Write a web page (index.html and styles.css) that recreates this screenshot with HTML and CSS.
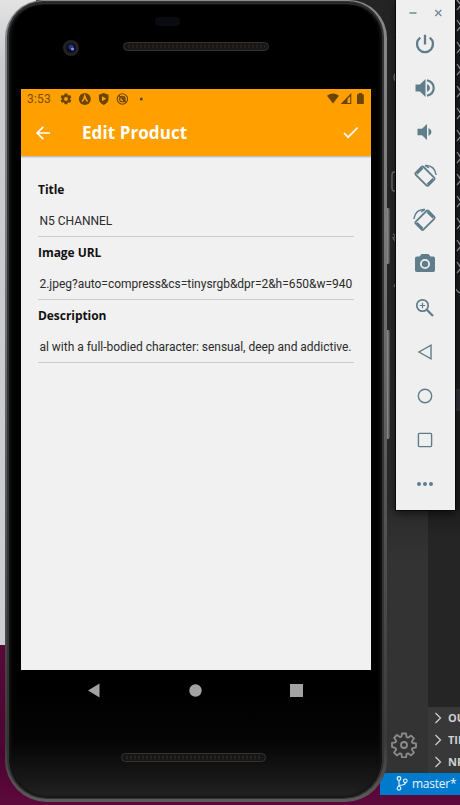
FILE: index.html
```
<!DOCTYPE html>
<html lang="en">
<head>
<meta charset="utf-8">
<title>Edit Product</title>
<link rel="stylesheet" href="styles.css">
</head>
<body>
<div class="desktop">
  <div class="back-window"></div>

  <section class="editor">
    <div class="workbench">
      <div class="activity">
        <svg class="activity-marks" width="10" height="300" viewBox="0 0 10 300"><g fill="none" stroke="#777" stroke-width="1.3"><path d="M10 32l-2 3M9 73q-4 4 0 9M10 172h-3q-2 0-2 3v13q0 3 2 3h3M6 234l3 2-3 2 3 4M10 280l-3 7"/></g></svg>
        <svg class="gear" width="26" height="26" viewBox="0 0 26 26"><g fill="none" stroke="#8b8b8b" stroke-width="1.8" stroke-linejoin="round"><path d="M11 1.5h4l.6 3.6 1.5.6 3-2.1 2.8 2.8-2.1 3 .6 1.5 3.6.6v4l-3.6.6-.6 1.5 2.1 3-2.8 2.8-3-2.1-1.5.6-.6 3.6h-4l-.6-3.6-1.5-.6-3 2.1-2.8-2.8 2.1-3-.6-1.5L1 14.900v-4l3.600-.6.6-1.500-2.100-3 2.800-2.800 3 2.100 1.500-.6z"/><circle cx="13" cy="13" r="3"/></g></svg>
      </div>
      <div class="sidebar">
        <div class="tree">
          <svg width="5" height="300" viewBox="0 0 5 300"><path d="M2 0l4 5-4 5M2 20l4 6-4 5M2 42l4 6-4 5M2 64l4 6-4 5M2 86l4 6-4 5M2 108l4 6-4 5M2 130l4 6-4 5M2 152l4 6-4 5M2 174l4 6-4 5M2 196l4 6-4 5M2 218l4 6-4 5M2 240l4 6-4 5M2 262l4 6-4 5M1 289q1 3 4 4" fill="none" stroke="#929ba4" stroke-width="1.3"/></svg>
        </div>
        <div class="panel"><svg width="8" height="12" viewBox="0 0 8 12"><path d="M1.500 1l5 5-5 5"/></svg>OUTLINE</div>
        <div class="panel"><svg width="8" height="12" viewBox="0 0 8 12"><path d="M1.500 1l5 5-5 5"/></svg>TIMELINE</div>
        <div class="panel"><svg width="8" height="12" viewBox="0 0 8 12"><path d="M1.500 1l5 5-5 5"/></svg>NPM SCRIPTS</div>
      </div>
    </div>
    <div class="statusbar">
      <svg width="12" height="15" viewBox="0 0 12 15"><g fill="none" stroke="#e8f3fa" stroke-width="1.200"><circle cx="3" cy="2.500" r="1.800"/><circle cx="3" cy="12.300" r="1.800"/><circle cx="9.300" cy="4.800" r="1.800"/><path d="M3 4.300v6.200M9.300 6.600q0 2.400-3 2.400Q3 9 3 10.500"/></g></svg>
      <span>master*</span>
    </div>
  </section>

  <i class="side-key key-power"></i>
  <i class="side-key key-volume"></i>

  <main class="phone">
    <div class="bezel">
      <div class="forehead">
        <svg width="350" height="84" viewBox="0 0 350 84">
          <rect x="134" y="12" width="25" height="9" rx="4" fill="#090b11"/>
          <circle cx="50" cy="43" r="8" fill="#222225"/><circle cx="50" cy="43" r="5" fill="#0b0e22"/>
          <circle cx="50" cy="42" r="2.600" fill="#27347c"/><circle cx="51.500" cy="44" r="1.600" fill="#7d91f0"/>
          <rect x="102.500" y="37.500" width="145" height="8" rx="4" fill="#171614" stroke="#343434"/>
          <path d="M107 41.500h137" stroke="#25221f" stroke-width="4" stroke-dasharray="2 2"/>
        </svg>
      </div>
      <div class="screen">
        <div class="app-head">
          <div class="android-bar">
            <span class="clock">3:53</span>
            <svg class="notices" width="86" height="14" viewBox="0 0 86 14">
              <g fill="#6b4505">
                <path fill-rule="evenodd" d="M4.700 1.500h2.600l.4 1.600.8.500 1.600-.6 1.300 2.200-1.200 1.200v1l1.200 1.200-1.300 2.200-1.600-.5-.8.500-.4 1.500H4.700l-.4-1.500-.8-.5-1.600.5L.6 8.600l1.200-1.200v-1L.6 5.200 1.900 3l1.600.6.8-.5zM6 5a1.900 1.900 0 100 3.900A1.900 1.900 0 006 5z"/>
                <circle cx="24.800" cy="7" r="6"/>
                <path fill-rule="evenodd" d="M43.700 1l4.800 1.700v4.100q0 4-4.800 6.200-4.800-2.200-4.800-6.200V2.700zM42 4.300v5L46.200 6.800z"/>
                <circle cx="81.300" cy="6.900" r="1.500"/>
              </g>
              <path d="M22 9.500q1.500-1 2.800-5.500 1.300 4.500 2.800 5.500" fill="none" stroke="#ffa000" stroke-width="1.500"/>
              <g fill="none" stroke="#6b4505" stroke-width="1.100"><circle cx="62.400" cy="7" r="5.200"/><circle cx="62.400" cy="7" r="2.800"/><path d="M59 3.500l7 7M62 6h2v2" stroke-width="1.300"/></g>
            </svg>
            <svg class="signals" width="38" height="14" viewBox="0 0 38 14"><g fill="#6b4505"><path d="M0 3.700q6-4.600 12 0L6 11.500z"/><path fill-rule="evenodd" d="M24.300 1v11H13.600zM23.200 4.300L20.500 7v3.900h2.700z"/><path d="M30 2.200h1.700V1h3.400v1.200h1.700V12H30z"/></g></svg>
          </div>
          <div class="nav">
            <svg width="14" height="14" viewBox="0 0 14 14"><path d="M14 7H1.500M7.300.8L1.100 7l6.200 6.200" fill="none" stroke="#fff" stroke-width="1.700"/></svg>
            <h1>Edit Product</h1>
            <svg class="check" width="16" height="13" viewBox="0 0 16 13"><path d="M1 7l4.200 4.200L14.700 1.500" fill="none" stroke="#fff" stroke-width="1.700"/></svg>
          </div>
        </div>
        <div class="form">
          <div class="field"><b>Title</b><p>N5 CHANNEL</p></div>
          <div class="field"><b>Image URL</b><p>2.jpeg?auto=compress&amp;cs=tinysrgb&amp;dpr=2&amp;h=650&amp;w=940</p></div>
          <div class="field"><b>Description</b><p>al with a full-bodied character: sensual, deep and addictive.</p></div>
        </div>
      </div>
      <div class="chin">
        <svg width="350" height="126" viewBox="0 0 350 126">
          <g fill="#a2a2a2"><path d="M67 20.500L78.500 13.500v14z"/><circle cx="174.500" cy="20.500" r="6.200"/><rect x="269" y="14" width="13" height="13"/></g>
          <rect x="100.500" y="83.500" width="144" height="8" rx="4" fill="#171614" stroke="#343434"/>
          <path d="M105 87.500h136" stroke="#25221f" stroke-width="4" stroke-dasharray="2 2"/>
        </svg>
      </div>
    </div>
  </main>

  <aside class="tools">
    <div class="window-buttons">
      <svg width="59" height="22" viewBox="0 0 59 22"><path d="M13.500 13h7M39.300 10l6 6M45.300 10l-6 6" fill="none" stroke="#718a95" stroke-width="1.400"/></svg>
    </div>
    <svg viewBox="0 0 24 24"><path d="M12 2.800v9.600M7.300 5.600a8 8 0 1 0 9.400 0" fill="none" stroke="#607d8b" stroke-width="2.300"/></svg>
    <svg viewBox="0 0 24 24"><path d="M2.500 8.500h4.400L12.500 3v18l-5.600-5.500H2.500zM14 8q3 1.500 3 4t-3 4z" fill="#607d8b"/><path d="M14 4.200q6.700 1.800 6.700 7.800T14 19.800" fill="none" stroke="#607d8b" stroke-width="2.200"/></svg>
    <svg viewBox="0 0 24 24"><path d="M4.500 8.800H9L14 4v16l-5-4.800H4.500zM15.500 8q3 1.500 3 4t-3 4z" fill="#607d8b"/></svg>
    <svg viewBox="0 0 24 24"><g fill="none" stroke="#607d8b"><rect x="6.500" y="3.200" width="11" height="18" rx="1.500" stroke-width="1.800" transform="rotate(-45 12 12.200)"/><path d="M2.200 9.500L9.500 2.200M14.500 22.200l7.300-7.300" stroke-width="1"/><path d="M3.700 9.700l5.800-5.800M14.500 20.700l5.800-5.800" stroke-width="2.400"/><path d="M12 1.500q9.500-.6 11.200 9.500M12 1.500l4 2.500" stroke-width="1.400"/></g></svg>
    <svg viewBox="0 0 24 24"><g fill="none" stroke="#607d8b"><rect x="6.500" y="3.200" width="11" height="18" rx="1.500" stroke-width="1.800" transform="rotate(45 12 12.200)"/><path d="M14.500 3.900l5.800 5.800M3.700 14.900l5.800 5.800" stroke-width="2.400"/><path d="M12 1.500Q2.500.9.800 11M12 1.500L8 4" stroke-width="1.400"/></g></svg>
    <svg viewBox="0 0 24 24"><path fill-rule="evenodd" d="M8.500 2h7l2 2.500h2.700q1.800 0 1.800 1.800v11.900q0 1.800-1.800 1.800H3.800Q2 20 2 18.200V6.300q0-1.800 1.800-1.800h2.700zM12 7a5 5 0 100 10 5 5 0 000-10z" fill="#607d8b"/><circle cx="12" cy="12" r="3.200" fill="#607d8b"/></svg>
    <svg viewBox="0 0 24 24"><g fill="none" stroke="#607d8b"><circle cx="9.500" cy="9.500" r="5.700" stroke-width="1.700"/><path d="M13.800 13.800l6.200 6.200" stroke-width="2.300"/><path d="M9.500 6.700v5.600M6.700 9.500h5.600" stroke-width="1.200"/></g></svg>
    <svg viewBox="0 0 24 24"><path d="M18 5.200v13.600L6 12z" fill="none" stroke="#607d8b" stroke-width="1.400"/></svg>
    <svg viewBox="0 0 24 24"><circle cx="12" cy="12" r="6.700" fill="none" stroke="#607d8b" stroke-width="1.400"/></svg>
    <svg viewBox="0 0 24 24"><rect x="5.400" y="5.400" width="13.200" height="13.200" rx="1" fill="none" stroke="#607d8b" stroke-width="1.400"/></svg>
    <svg viewBox="0 0 24 24"><g fill="#607d8b"><circle cx="6" cy="12" r="2"/><circle cx="12" cy="12" r="2"/><circle cx="18" cy="12" r="2"/></g></svg>
  </aside>
</div>
</body>
</html>
```
FILE: styles.css
```
* { box-sizing: border-box; }
body { margin: 0; }
svg { display: block; flex: none; }

.desktop {
  position: relative;
  width: 460px;
  height: 805px;
  overflow: hidden;
  background: linear-gradient(#5a0837 80%, #4d0330 94%, #5e093c);
}
.back-window {
  position: absolute;
  left: 0;
  top: 0;
  width: 60px;
  height: 645px;
  background: linear-gradient(#e3e3e3, #c9cbd0 60px, #cbcdd2);
}

.editor {
  position: absolute;
  left: 36px;
  top: 0;
  width: 424px;
  height: 795px;
  display: flex;
  flex-direction: column;
}
.workbench { display: flex; height: 773px; }
.activity {
  width: 392px;
  padding: 0 11px 15px 0;
  background: linear-gradient(#242424, #2a2a2a 500px, #333 560px);
  display: flex;
  flex-direction: column;
  justify-content: space-between;
  align-items: flex-end;
}
.activity-marks { margin-right: 20px; }
.sidebar { width: 32px; display: flex; flex-direction: column; background: #383838; }
.tree {
  height: 707px;
  display: flex;
  justify-content: flex-end;
  background: linear-gradient(#1b1c1d 389px, #303139 389px, #303139 411px, #1d1d1e 411px, #1d1d1e 505px, #252526 540px);
}
.panel {
  height: 22px;
  padding-left: 6px;
  display: flex;
  align-items: center;
  gap: 6px;
  overflow: hidden;
  white-space: nowrap;
  font: 700 11px/20px "Open Sans", sans-serif;
  color: #d0d0d0;
}
.panel svg { margin-top: -1px; }
.panel path { fill: none; stroke: #ccc; stroke-width: 1.3; }
.statusbar {
  height: 22px;
  margin-left: 344px;
  padding-left: 16px;
  display: flex;
  align-items: center;
  gap: 4px;
  background: #007acc;
  color: #edf6fc;
  font: 12px "Open Sans", sans-serif;
  letter-spacing: -.25px;
}
.statusbar svg { margin-top: -1px; }
.statusbar span { margin-top: -2px; }

.side-key {
  position: absolute;
  left: 384px;
  width: 6px;
  border-radius: 2px;
  background: linear-gradient(90deg, #333, #8a8a8a 60%, #444);
}
.key-power { top: 208px; height: 56px; }
.key-volume { top: 330px; height: 109px; }

.phone {
  position: absolute;
  left: 5px;
  top: 0;
  width: 382px;
  height: 802px;
  padding: 1px 3px 3px 2px;
  border-radius: 38px 38px 42px 42px;
  background: linear-gradient(#8a8a8a, #7b7b7b 230px, #565656 500px, #3a3a3a 740px, #5c5c5c);
}
.bezel {
  height: 798px;
  padding: 3px 11px 0 12px;
  border: solid #343434;
  border-width: 1px 2px;
  border-radius: 36px 36px 40px 40px;
  background: linear-gradient(#000 690px, #050505 740px, #1c1c1c 785px, #262626);
  box-shadow: inset 0 0 3px 2px #151515, inset 0 3px 1px -1px #6d7272;
}
.forehead { height: 84px; }
.screen {
  width: 350px;
  height: 581px;
  background: #f1f1f1;
  display: flex;
  flex-direction: column;
}
.app-head {
  height: 67px;
  background: #ffa000;
  box-shadow: 0 1px 2px rgba(0, 0, 0, .3);
}
.android-bar { height: 20px; padding: 3px 6px 0; display: flex; align-items: flex-start; }
.clock { width: 33px; font: 12px/15px Roboto, sans-serif; letter-spacing: .2px; color: #7a4f05; }
.signals { margin-left: auto; }
.nav { height: 47px; padding: 0 12px 0 15px; display: flex; align-items: center; }
.nav h1 {
  margin: 1px 0 0 32px;
  font: 700 17px/24px "Open Sans", sans-serif;
  letter-spacing: .08px;
  color: #fff;
}
.check { margin-left: auto; }

.form { padding: 22px 17px 0; }
.field { height: 63px; }
.field b {
  display: block;
  height: 21px;
  font: 700 12px/23px "Open Sans", sans-serif;
  letter-spacing: -.05px;
  color: #111;
}
.field p {
  margin: 5px 0 0;
  height: 33px;
  padding: 6px 2px 0 1.500px;
  border-bottom: 1px solid #ccc;
  font: 12px/22px Roboto, sans-serif;
  letter-spacing: -.02px;
  color: #2b2b2b;
  white-space: nowrap;
}

.tools {
  position: absolute;
  left: 395px;
  top: 0;
  width: 61px;
  height: 511px;
  border: solid #090909;
  border-width: 0 1px 1px;
  background: #efefef;
  box-shadow: 0 3px 8px rgba(0, 0, 0, .5);
  display: flex;
  flex-direction: column;
  align-items: flex-start;
}
.tools > svg { width: 24px; height: 24px; margin: 10px 0 10px 17px; }
.window-buttons { height: 22px; }
```
